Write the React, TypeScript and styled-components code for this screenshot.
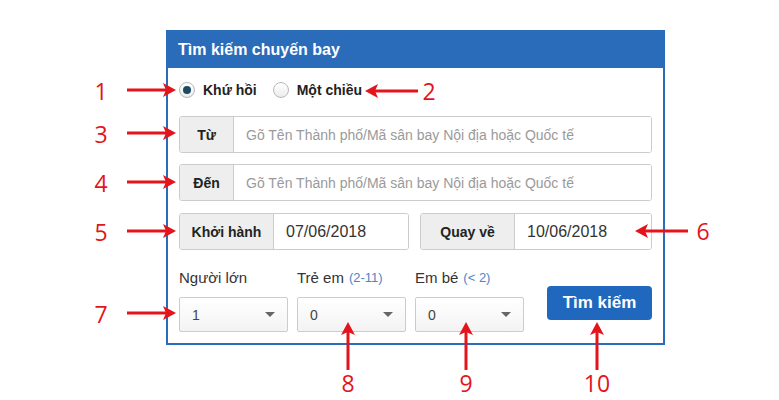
import React from 'react';
import styled, { createGlobalStyle } from 'styled-components';

const GlobalStyle = createGlobalStyle`
  html, body { margin: 0; padding: 0; background: #fff; }
  body { font-family: "Liberation Sans", Arial, sans-serif; color: #333; }
  * { box-sizing: border-box; }
`;

const Stage = styled.div`
  position: relative;
  width: 779px;
  height: 400px;
  padding: 30px 0 0 166px;
`;

const Panel = styled.div`
  width: 499px;
  border: 2px solid #2a6cba;
  background: #fff;
`;

const Header = styled.div`
  height: 36px;
  display: flex;
  align-items: center;
  padding-left: 10px;
  background: #2a6cba;
  color: #fff;
  font-size: 16px;
  font-weight: bold;
`;

const Body = styled.div`
  padding: 11px 11px 11px;
`;

const RadioRow = styled.div`
  height: 22px;
  display: flex;
  align-items: center;
  margin-bottom: 15px;
`;

const RadioLabel = styled.label`
  display: flex;
  align-items: center;
  gap: 8px;
  margin-right: 16px;
  font-size: 14px;
  font-weight: bold;
  color: #222;
`;

const RadioDot = styled.span<{ $on?: boolean }>`
  width: 16px;
  height: 16px;
  border-radius: 50%;
  border: 1px solid #b8b8b8;
  background: linear-gradient(#fff, #ececec);
  display: flex;
  align-items: center;
  justify-content: center;
  &::after {
    content: '';
    width: 8px;
    height: 8px;
    border-radius: 50%;
    background: #1d4a62;
    display: ${({ $on }) => ($on ? 'block' : 'none')};
  }
`;

const Group = styled.div<{ $gap?: number }>`
  display: flex;
  height: 37px;
  border: 1px solid #ccc;
  border-radius: 3px;
  overflow: hidden;
  margin-bottom: ${({ $gap }) => $gap ?? 0}px;
`;

const Addon = styled.div<{ $w: number }>`
  width: ${({ $w }) => $w}px;
  flex: none;
  display: flex;
  align-items: center;
  justify-content: center;
  background: #eee;
  border-right: 1px solid #ccc;
  font-size: 14px;
  font-weight: bold;
  color: #222;
`;

const Field = styled.div<{ $value?: boolean }>`
  flex: 1;
  display: flex;
  align-items: center;
  padding-left: 12px;
  font-size: ${({ $value }) => ($value ? 16 : 14)}px;
  color: ${({ $value }) => ($value ? '#333' : '#9a9a9a')};
  background: #fff;
`;

const DateRow = styled.div`
  display: grid;
  grid-template-columns: 230px 232px;
  gap: 11px;
`;

const PaxRow = styled.div`
  display: flex;
  align-items: flex-end;
  gap: 9px;
  margin-top: 17px;
`;

const PaxCol = styled.div`
  display: flex;
  flex-direction: column;
`;

const PaxLabel = styled.div`
  height: 20px;
  margin-bottom: 10px;
  display: flex;
  align-items: center;
  font-size: 15px;
  color: #333;
  white-space: nowrap;
`;

const Hint = styled.span`
  margin-left: 5px;
  font-size: 13px;
  color: #4a86c8;
`;

const Select = styled.div`
  width: 109px;
  height: 35px;
  display: flex;
  align-items: center;
  justify-content: space-between;
  padding: 0 12px;
  border: 1px solid #ccc;
  border-radius: 2px;
  background: linear-gradient(#fff, #f3f3f3);
  font-size: 14px;
  color: #444;
  &::after {
    content: '';
    border-left: 5px solid transparent;
    border-right: 5px solid transparent;
    border-top: 5px solid #666;
  }
`;

const SearchButton = styled.button`
  margin-left: auto;
  margin-bottom: 12px;
  width: 105px;
  height: 34px;
  border: none;
  border-radius: 4px;
  background: #2068bd;
  color: #fff;
  font-family: inherit;
  font-size: 17px;
  font-weight: bold;
`;

const Mark = styled.div<{ $x: number; $y: number }>`
  position: absolute;
  left: ${({ $x }) => $x}px;
  top: ${({ $y }) => $y}px;
  line-height: 0;
`;

const Num = styled.div<{ $x: number; $y: number }>`
  position: absolute;
  left: ${({ $x }) => $x}px;
  top: ${({ $y }) => $y}px;
  transform: translate(-50%, -50%);
  font-family: "Open Sans", sans-serif;
  font-size: 23px;
  line-height: 1;
  color: #e3141c;
`;

const RED = '#e3141c';

const Arrow: React.FC<{ dir: 'left' | 'right' | 'up'; len: number }> = ({ dir, len }) => {
  if (dir === 'up') {
    return (
      <svg width={14} height={len} viewBox={`0 0 14 ${len}`}>
        <line x1={7} y1={len} x2={7} y2={10} stroke={RED} strokeWidth={3} />
        <polygon points="7,0 0,13 7,10 14,13" fill={RED} />
      </svg>
    );
  }
  const flip = dir === 'left';
  return (
    <svg width={len} height={14} viewBox={`0 0 ${len} 14`} style={flip ? { transform: 'scaleX(-1)' } : undefined}>
      <line x1={0} y1={7} x2={len - 10} y2={7} stroke={RED} strokeWidth={3} />
      <polygon points={`${len},7 ${len - 13},0 ${len - 10},7 ${len - 13},14`} fill={RED} />
    </svg>
  );
};

const leftMarks = [
  { n: '1', y: 90 },
  { n: '3', y: 133 },
  { n: '4', y: 182 },
  { n: '5', y: 231 },
  { n: '7', y: 313 },
];

const bottomMarks = [
  { n: '8', x: 348 },
  { n: '9', x: 466 },
  { n: '10', x: 597 },
];

const App: React.FC = () => {
  return (
    <>
      <GlobalStyle />
      <Stage>
        <Panel>
          <Header>Tìm kiếm chuyến bay</Header>
          <Body>
            <RadioRow>
              <RadioLabel>
                <RadioDot $on />
                Khứ hồi
              </RadioLabel>
              <RadioLabel>
                <RadioDot />
                Một chiều
              </RadioLabel>
            </RadioRow>
            <Group $gap={11}>
              <Addon $w={54}>Từ</Addon>
              <Field>Gõ Tên Thành phố/Mã sân bay Nội địa hoặc Quốc tế</Field>
            </Group>
            <Group $gap={12}>
              <Addon $w={54}>Đến</Addon>
              <Field>Gõ Tên Thành phố/Mã sân bay Nội địa hoặc Quốc tế</Field>
            </Group>
            <DateRow>
              <Group>
                <Addon $w={94}>Khởi hành</Addon>
                <Field $value>07/06/2018</Field>
              </Group>
              <Group>
                <Addon $w={94}>Quay về</Addon>
                <Field $value>10/06/2018</Field>
              </Group>
            </DateRow>
            <PaxRow>
              <PaxCol>
                <PaxLabel>Người lớn</PaxLabel>
                <Select>1</Select>
              </PaxCol>
              <PaxCol>
                <PaxLabel>
                  Trẻ em<Hint>(2-11)</Hint>
                </PaxLabel>
                <Select>0</Select>
              </PaxCol>
              <PaxCol>
                <PaxLabel>
                  Em bé<Hint>(&lt; 2)</Hint>
                </PaxLabel>
                <Select>0</Select>
              </PaxCol>
              <SearchButton>Tìm kiếm</SearchButton>
            </PaxRow>
          </Body>
        </Panel>

        {leftMarks.map((m) => (
          <React.Fragment key={m.n}>
            <Num $x={101} $y={m.y + 1}>{m.n}</Num>
            <Mark $x={127} $y={m.y - 7}>
              <Arrow dir="right" len={49} />
            </Mark>
          </React.Fragment>
        ))}

        <Mark $x={365} $y={84}>
          <Arrow dir="left" len={53} />
        </Mark>
        <Num $x={429} $y={91}>2</Num>

        <Mark $x={635} $y={224}>
          <Arrow dir="left" len={53} />
        </Mark>
        <Num $x={703} $y={231}>6</Num>

        {bottomMarks.map((m) => (
          <React.Fragment key={m.n}>
            <Mark $x={m.x - 7} $y={322}>
              <Arrow dir="up" len={48} />
            </Mark>
            <Num $x={m.x} $y={383}>{m.n}</Num>
          </React.Fragment>
        ))}
      </Stage>
    </>
  );
};

export default App;
